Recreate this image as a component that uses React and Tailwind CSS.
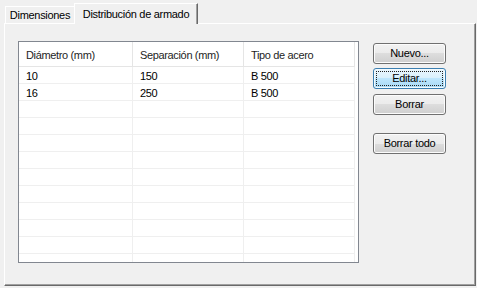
import React from "react";

const font = { fontFamily: '"Liberation Sans", Arial, sans-serif' };

function Btn({ children, focused, className = "" }) {
  if (focused) {
    return (
      <div
        className={
          "relative w-[73px] h-[21px] rounded-[3px] border border-[#3c7fb1] bg-[linear-gradient(to_bottom,#eaf6fd_0%,#d9f0fc_50%,#bee6fd_50%,#a7d9f5_100%)] shadow-[inset_0_0_0_1px_#f4fbfe] flex items-center justify-center text-[11px] tracking-[-0.3px] text-black " +
          className
        }
      >
        <div className="absolute left-[2px] right-[2px] top-[2px] bottom-[2px] border border-dotted border-[#222]" />
        <span className="relative">{children}</span>
      </div>
    );
  }
  return (
    <div
      className={
        "w-[73px] h-[21px] rounded-[3px] border border-[#707070] bg-[linear-gradient(to_bottom,#f2f2f2_0%,#ebebeb_50%,#dddddd_50%,#cfcfcf_100%)] shadow-[inset_0_0_0_1px_#fcfcfc] flex items-center justify-center text-[11px] tracking-[-0.3px] text-black " +
        className
      }
    >
      {children}
    </div>
  );
}

export default function App() {
  const data = [
    ["10", "150", "B 500"],
    ["16", "250", "B 500"],
  ];
  const rows = [];
  for (let i = 0; i < 12; i++) rows.push(data[i] || ["", "", ""]);
  const widths = ["w-[114px]", "w-[111px]", "w-[111px]"];

  return (
    <div
      className="w-[477px] h-[288px] bg-[#f0f0f0] overflow-hidden text-black"
      style={font}
    >
      {/* tab strip */}
      <div className="flex items-end h-[23px] pl-[5px]">
        <div className="w-[69px] h-[17px] border-t border-l border-white bg-[#f0f0f0] flex items-center justify-center text-[11px] tracking-[-0.3px]">
          Dimensiones
        </div>
        <div className="relative z-10 -mb-[1px] w-[124px] h-[21px] border-t border-l border-white border-r border-r-[#696969] shadow-[inset_-1px_0_0_#a0a0a0] bg-[#f0f0f0] flex items-center justify-center text-[11px] tracking-[-0.3px]">
          Distribución de armado
        </div>
      </div>

      {/* panel */}
      <div className="ml-[4px] w-[472px] h-[263px] border-t border-l border-white border-r border-b border-r-[#696969] border-b-[#696969] shadow-[inset_-1px_-1px_0_#a0a0a0] flex pl-[13px] pt-[17px]">
        {/* list view */}
        <div className="w-[341px] h-[222px] border border-[#828790] bg-white overflow-hidden">
          <div className="flex h-[25px]">
            {["Diámetro (mm)", "Separación (mm)", "Tipo de acero"].map((t, i) => (
              <div
                key={i}
                className={
                  widths[i] +
                  " h-full border-r border-b border-[#e5e5e5] flex items-center pt-[3px] pl-[7px] text-[11px] tracking-[-0.35px] text-[#1e1e1e]"
                }
              >
                {t}
              </div>
            ))}
          </div>
          {rows.map((r, ri) => (
            <div key={ri} className="flex h-[17px]">
              {r.map((c, ci) => (
                <div
                  key={ci}
                  className={
                    widths[ci] +
                    " h-full border-r border-b border-[#efefef] flex items-center pt-[2px] pl-[7px] text-[11px] tracking-[-0.35px]"
                  }
                >
                  {c}
                </div>
              ))}
            </div>
          ))}
        </div>

        {/* buttons */}
        <div className="flex flex-col ml-[14px] pt-[2px]">
          <Btn>Nuevo...</Btn>
          <Btn focused className="mt-[4px]">
            Editar...
          </Btn>
          <Btn className="mt-[5px]">Borrar</Btn>
          <Btn className="mt-[18px]">Borrar todo</Btn>
        </div>
      </div>
    </div>
  );
}
